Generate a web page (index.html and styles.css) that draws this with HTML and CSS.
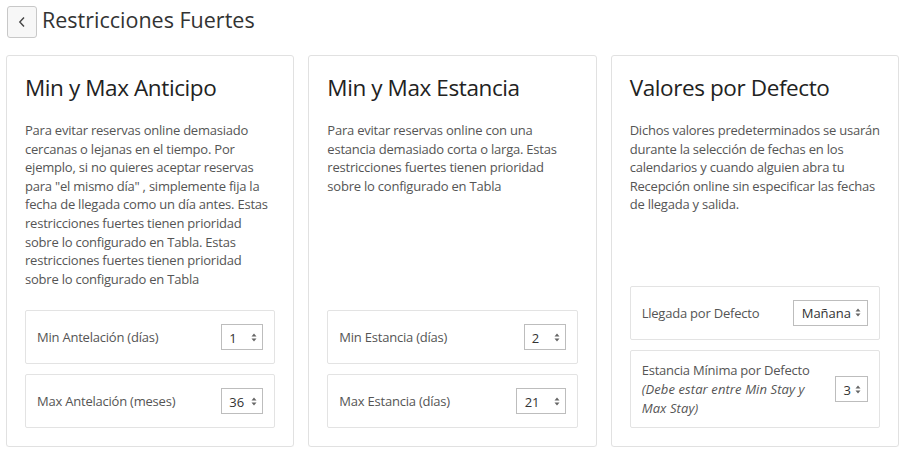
FILE: index.html
```html
<!DOCTYPE html>
<html lang="es">
<head>
<meta charset="utf-8">
<title>Restricciones Fuertes</title>
<link rel="stylesheet" href="styles.css">
</head>
<body>
<div class="page">
  <header class="top">
    <button class="back" type="button" aria-label="Volver">
      <svg width="8" height="12" viewBox="0 0 8 12"><path d="M6 1.5 L1.8 6 L6 10.5" fill="none" stroke="#444" stroke-width="1.4"/></svg>
    </button>
    <h1 class="page-title">Restricciones Fuertes</h1>
  </header>
  <main class="cards">
    <section class="card">
      <h2 class="card-title">Min y Max Anticipo</h2>
      <p class="desc">Para evitar reservas online demasiado cercanas o lejanas en el tiempo. Por ejemplo, si no quieres aceptar reservas para "el mismo día" , simplemente fija la fecha de llegada como un día antes. Estas restricciones fuertes tienen prioridad sobre lo configurado en Tabla. Estas restricciones fuertes tienen prioridad sobre lo configurado en Tabla</p>
      <div class="fields">
        <div class="field">
          <span class="label">Min Antelación (días)</span>
          <span class="select"><span class="val">1</span><svg class="arr" width="6" height="9" viewBox="0 0 6 9"><path d="M3 0.5 L5.5 3.5 H0.5Z M3 8.5 L5.5 5.5 H0.5Z" fill="#666"/></svg></span>
        </div>
        <div class="field">
          <span class="label">Max Antelación (meses)</span>
          <span class="select"><span class="val">36</span><svg class="arr" width="6" height="9" viewBox="0 0 6 9"><path d="M3 0.5 L5.5 3.5 H0.5Z M3 8.5 L5.5 5.5 H0.5Z" fill="#666"/></svg></span>
        </div>
      </div>
    </section>
    <section class="card">
      <h2 class="card-title">Min y Max Estancia</h2>
      <p class="desc">Para evitar reservas online con una estancia demasiado corta o larga. Estas restricciones fuertes tienen prioridad sobre lo configurado en Tabla</p>
      <div class="fields">
        <div class="field">
          <span class="label">Min Estancia (días)</span>
          <span class="select s-wide"><span class="val">2</span><svg class="arr" width="6" height="9" viewBox="0 0 6 9"><path d="M3 0.5 L5.5 3.5 H0.5Z M3 8.5 L5.5 5.5 H0.5Z" fill="#666"/></svg></span>
        </div>
        <div class="field">
          <span class="label">Max Estancia (días)</span>
          <span class="select s-wider"><span class="val">21</span><svg class="arr" width="6" height="9" viewBox="0 0 6 9"><path d="M3 0.5 L5.5 3.5 H0.5Z M3 8.5 L5.5 5.5 H0.5Z" fill="#666"/></svg></span>
        </div>
      </div>
    </section>
    <section class="card">
      <h2 class="card-title">Valores por Defecto</h2>
      <p class="desc">Dichos valores predeterminados se usarán durante la selección de fechas en los calendarios y cuando alguien abra tu Recepción online sin especificar las fechas de llegada y salida.</p>
      <div class="fields">
        <div class="field">
          <span class="label">Llegada por Defecto</span>
          <span class="select s-auto"><span class="val">Mañana</span><svg class="arr" width="6" height="9" viewBox="0 0 6 9"><path d="M3 0.5 L5.5 3.5 H0.5Z M3 8.5 L5.5 5.5 H0.5Z" fill="#666"/></svg></span>
        </div>
        <div class="field">
          <span class="label">Estancia Mínima por Defecto <em>(Debe estar entre Min Stay y Max Stay)</em></span>
          <span class="select s-auto"><span class="val">3</span><svg class="arr" width="6" height="9" viewBox="0 0 6 9"><path d="M3 0.5 L5.5 3.5 H0.5Z M3 8.5 L5.5 5.5 H0.5Z" fill="#666"/></svg></span>
        </div>
      </div>
    </section>
  </main>
</div>
</body>
</html>
```
FILE: styles.css
```css
* { box-sizing: border-box; }
html, body { margin: 0; padding: 0; background: #fff; }
body {
  font-family: "Open Sans", "Noto Sans", sans-serif;
  color: #333;
}
.page { padding: 6px 6px 0 6px; }
.top {
  display: flex;
  align-items: center;
  gap: 5px;
  height: 32px;
  margin-left: 1px;
}
.back {
  width: 30px;
  height: 32px;
  border: 1px solid #c8c8c8;
  border-radius: 3px;
  background: #f7f7f7;
  display: flex;
  align-items: center;
  justify-content: center;
  padding: 0;
}
.page-title {
  margin: 0;
  font-weight: 400;
  font-size: 21.5px;
  color: #333;
  line-height: 1;
  position: relative;
  top: -2px;
}
.cards {
  margin-top: 17px;
  display: grid;
  grid-template-columns: repeat(3, 1fr);
  gap: 14px;
}
.card {
  border: 1px solid #e1e1e1;
  border-radius: 3px;
  padding: 19px 18px 18px 18px;
  display: flex;
  flex-direction: column;
  box-shadow: 0 1px 1px rgba(0,0,0,0.03);
}
.card-title {
  margin: 0 0 20px 0;
  font-size: 22.5px;
  line-height: 26px;
  letter-spacing: -0.4px;
  font-weight: 400;
  color: #222;
}
.desc {
  margin: 0 0 22px 0;
  font-size: 13px;
  line-height: 18.6px;
  letter-spacing: -0.22px;
  color: #555;
}
.fields {
  margin-top: auto;
  display: flex;
  flex-direction: column;
  gap: 10px;
}
.field {
  border: 1px solid #e3e3e3;
  border-radius: 2px;
  padding: 10px 11px 10px 11px;
  min-height: 54px;
  display: flex;
  align-items: center;
  justify-content: space-between;
  gap: 10px;
}
.label {
  font-size: 13px;
  line-height: 18.8px;
  letter-spacing: -0.22px;
  color: #555;
}
.label em { font-style: italic; letter-spacing: 0.1px; }
.select {
  flex: none;
  height: 26px;
  width: 42px;
  border: 1px solid #bdbdbd;
  background: #fff;
  display: flex;
  align-items: center;
  justify-content: space-between;
  padding: 0 5px 0 7px;
  font-size: 13px;
  color: #333;
}
.select .val { line-height: 1; padding-top: 2px; }
.s-wide { width: 42px; }
.s-wider { width: 50px; padding-left: 8px; }
.s-auto { width: auto; gap: 4px; padding: 0 6px 0 8px; }
.arr { display: block; }
```
